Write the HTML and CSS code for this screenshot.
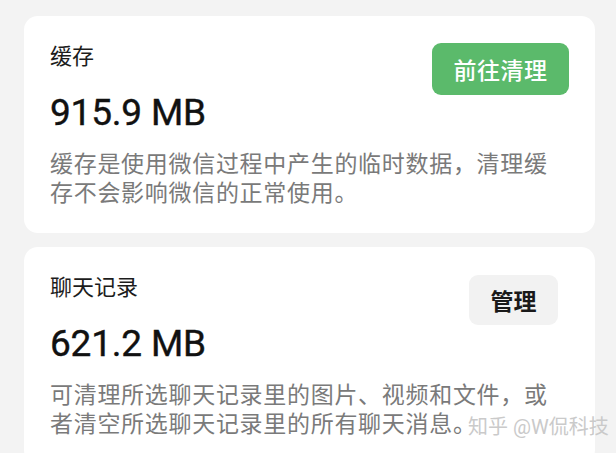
FILE: index.html
```html
<!DOCTYPE html>
<html lang="zh-CN">
<head>
    <meta charset="UTF-8">
    <meta name="viewport" content="width=device-width, initial-scale=1.0">
    <title>存储空间</title>
    <link rel="stylesheet" href="styles.css">
</head>
<body>

    <div class="card">
        <div class="card-head">
            <div class="info">
                <div class="title">缓存</div>
                <div class="size">915.9 MB</div>
            </div>
            <button class="btn btn-green">前往清理</button>
        </div>
        <p class="desc">缓存是使用微信过程中产生的临时数据，清理缓存不会影响微信的正常使用。</p>
    </div>

    <div class="card">
        <div class="card-head">
            <div class="info">
                <div class="title">聊天记录</div>
                <div class="size">621.2 MB</div>
            </div>
            <button class="btn btn-gray">管理</button>
        </div>
        <p class="desc">可清理所选聊天记录里的图片、视频和文件，或者清空所选聊天记录里的所有聊天消息。</p>
        <span class="watermark">知乎 @W侃科技</span>
    </div>

</body>
</html>
```

FILE: styles.css
```css
body {
    font-family: Roboto, "Noto Sans CJK SC", sans-serif;
    background-color: #f3f3f3;
    color: #1a1a1a;
    margin: 0;
    padding: 16px 21px 0 24px;
}

.card {
    position: relative;
    background-color: #fff;
    border-radius: 14px;
    padding: 26px 26px 25px 26px;
    margin-bottom: 14px;
}

.card-head {
    display: flex;
    justify-content: space-between;
    align-items: flex-start;
}

.title {
    font-size: 22px;
    line-height: 30px;
    color: #1c1c1c;
}

.size {
    font-size: 37px;
    line-height: 44px;
    font-weight: 400;
    color: #111;
    margin-top: 19px;
    letter-spacing: -0.2px;
    -webkit-text-stroke: 0.4px #111;
}

.btn {
    font-family: Roboto, "Noto Sans CJK SC", sans-serif;
    font-size: 23px;
    font-weight: 500;
    border: none;
    border-radius: 9px;
    cursor: pointer;
    padding: 0;
}

.btn-green {
    background-color: #5bba6b;
    color: #fff;
    width: 137px;
    height: 52px;
    margin-top: 1px;
    letter-spacing: 0.5px;
}

.btn-gray {
    background-color: #f2f2f2;
    color: #1a1a1a;
    width: 89px;
    height: 50px;
    margin-top: 2px;
    margin-right: 11px;
    font-weight: 700;
}

.desc {
    font-size: 23px;
    line-height: 29px;
    letter-spacing: 0.7px;
    color: #7a7a7a;
    margin: 15px 10px 0 0;
}

.watermark {
    position: absolute;
    left: 444px;
    top: 166px;
    font-size: 20px;
    line-height: 29px;
    color: #cacaca;
    white-space: nowrap;
}
```
